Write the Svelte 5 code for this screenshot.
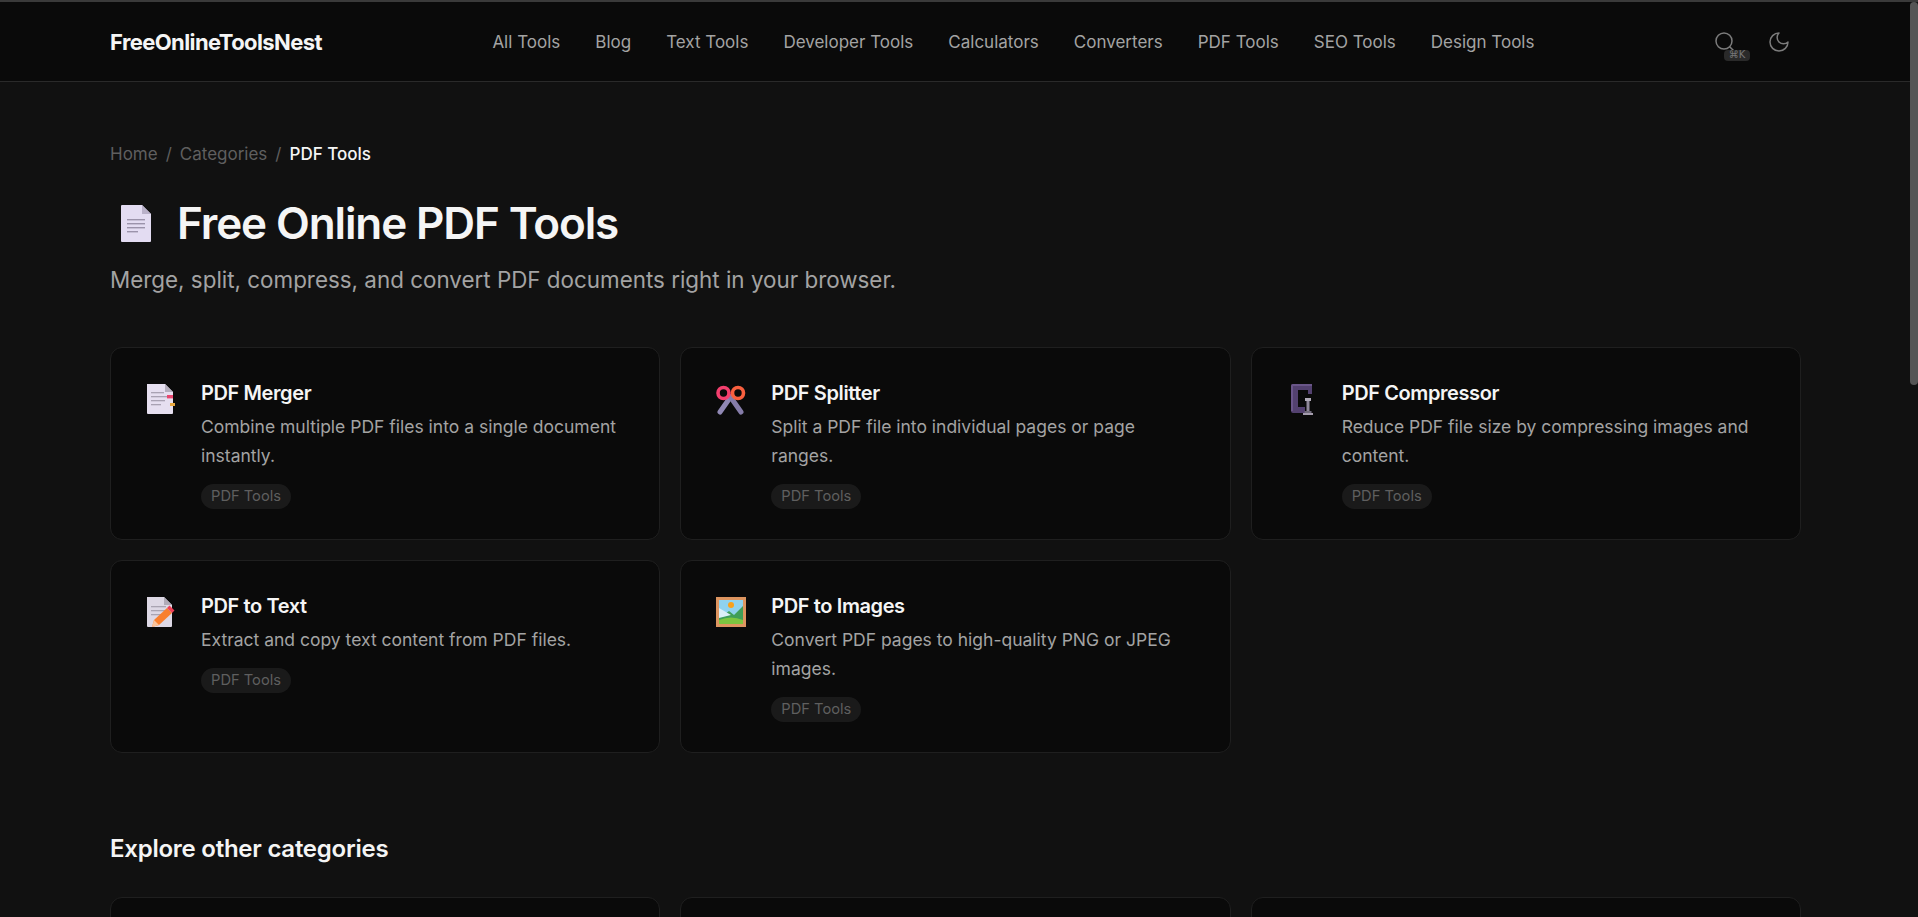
<script>
  const nav = ['All Tools','Blog','Text Tools','Developer Tools','Calculators','Converters','PDF Tools','SEO Tools','Design Tools'];
  const tools = [
    { id:'merge', name:'PDF Merger', desc:'Combine multiple PDF files into a single document instantly.' },
    { id:'split', name:'PDF Splitter', desc:'Split a PDF file into individual pages or page ranges.' },
    { id:'clamp', name:'PDF Compressor', desc:'Reduce PDF file size by compressing images and content.' },
    { id:'text', name:'PDF to Text', desc:'Extract and copy text content from PDF files.' },
    { id:'image', name:'PDF to Images', desc:'Convert PDF pages to high-quality PNG or JPEG images.' }
  ];
  const others = [
    { name:'Text Tools', desc:'Format, count, and transform text.' },
    { name:'Developer Tools', desc:'Format, encode, and debug code.' },
    { name:'Calculators', desc:'Quick calculators for everyday numbers.' },
    { name:'Converters', desc:'Convert units, formats, and files.' },
    { name:'SEO Tools', desc:'Check and improve how pages rank.' },
    { name:'Design Tools', desc:'Pick colours and build gradients.' }
  ];
</script>

<div class="topline"></div>
<div class="scrollthumb"></div>
<div class="page">
<header class="header">
  <a class="logo" href="#top">FreeOnlineToolsNest</a>
  <nav class="nav">
    {#each nav as item}<a href="#top">{item}</a>{/each}
  </nav>
  <div class="actions">
    <button class="iconbtn" aria-label="Search">
      <svg width="24" height="24" viewBox="0 0 24 24" fill="none" stroke="currentColor" stroke-width="1.5" stroke-linecap="round" stroke-linejoin="round"><circle cx="11" cy="11" r="8"/><path d="m21 21-4.3-4.3"/></svg>
      <kbd class="kbd">⌘K</kbd>
    </button>
    <button class="iconbtn" aria-label="Theme">
      <svg width="24" height="24" viewBox="0 0 24 24" fill="none" stroke="currentColor" stroke-width="1.5" stroke-linecap="round" stroke-linejoin="round"><path d="M12 3a6 6 0 0 0 9 9 9 9 0 1 1-9-9Z"/></svg>
    </button>
  </div>
</header>

<main class="main">
  <div class="crumbs">
    <a href="#top">Home</a><span class="sep">/</span><a href="#top">Categories</a><span class="sep">/</span><span class="current">PDF Tools</span>
  </div>

  <div class="titlerow">
    <svg class="titleicon" width="30" height="37" viewBox="0 0 30 37" aria-hidden="true">
      <path d="M1 0H21L30 9V36a1 1 0 0 1-1 1H1a1 1 0 0 1-1-1V1a1 1 0 0 1 1-1Z" fill="#e3dcf2"/>
      <path d="M21 0L30 9H21Z" fill="#b9b1c9"/>
      <g fill="#9b93ab"><rect x="6" y="14" width="18" height="1.4"/><rect x="6" y="18" width="18" height="1.4"/><rect x="6" y="22" width="18" height="1.4"/><rect x="6" y="26" width="11" height="1.4"/></g>
    </svg>
    <h1>Free Online PDF Tools</h1>
  </div>
  <p class="sub">Merge, split, compress, and convert PDF documents right in your browser.</p>

  <section class="grid">
    {#each tools as t}
      <a class="card" href="#top">
        <span class="cardicon">
          <svg width="36" height="36" viewBox="0 0 36 36" aria-hidden="true">
            {#if t.id === 'merge'}
              <path d="M4 3H22L30 11V32a1 1 0 0 1-1 1H5a1 1 0 0 1-1-1Z" fill="#e6dff0"/>
              <path d="M22 3L30 11H22Z" fill="#b4adbd"/>
              <g fill="#a9a2b3"><rect x="8" y="11" width="13" height="1.3"/><rect x="8" y="15" width="16" height="1.3"/><rect x="8" y="19" width="14" height="1.3"/><rect x="8" y="23" width="10" height="1.3"/></g>
              <rect x="24" y="14" width="6" height="3.4" fill="#e8466e"/>
              <rect x="27" y="22" width="5" height="3" fill="#e9a83f"/>
            {:else if t.id === 'split'}
              <g stroke-width="5" stroke-linecap="round" fill="none">
                <path d="M17.5 16L7 31" stroke="#9088b4"/>
                <path d="M17.5 16L28 31" stroke="#857ca8"/>
              </g>
              <circle cx="10.5" cy="12" r="5.5" fill="none" stroke="#f43f6e" stroke-width="3.6"/>
              <circle cx="25" cy="12" r="5.5" fill="none" stroke="#f9603f" stroke-width="3.6"/>
            {:else if t.id === 'clamp'}
              <path d="M9 3H28V13H24V9H14V26H21V32H9Q7 32 7 30V5Q7 3 9 3Z" fill="#53416f"/>
              <path d="M9 3H28V5H9V30H7V5Q7 3 9 3Z" fill="#6a5689"/>
              <rect x="21" y="17" width="6" height="3" fill="#b1abb8"/>
              <rect x="22.5" y="20" width="3" height="10" fill="#8f8899"/>
              <rect x="20.5" y="30" width="7" height="2" fill="#6f6979"/>
              <rect x="19" y="32" width="10" height="2" fill="#a49cad"/>
            {:else if t.id === 'text'}
              <path d="M4 3H21L29 11V32a1 1 0 0 1-1 1H5a1 1 0 0 1-1-1Z" fill="#ddd8e5"/>
              <path d="M21 3L29 11H21Z" fill="#b0abb8"/>
              <g fill="#a9a4b2"><rect x="8" y="12" width="15" height="1.3"/><rect x="8" y="16" width="17" height="1.3"/><rect x="8" y="20" width="13" height="1.3"/></g>
              <path d="M9 33L11 26L24 14L29 19L16 31Z" fill="#f97f2e"/>
              <path d="M9 33L11 26L16 31Z" fill="#fbc39a"/>
              <path d="M24 14L26.5 11.5L31.5 16.5L29 19Z" fill="#ef4056"/>
            {:else}
              <rect x="3" y="3" width="30" height="30" fill="#dd9560"/>
              <rect x="6" y="6" width="24" height="24" fill="#8fd2ee"/>
              <path d="M6 16L12 20L16 17L21 21L30 12V30H6Z" fill="#3f9e58"/>
              <path d="M6 14L18 21L6 24Z" fill="#dbeef7"/>
              <path d="M6 30V26Q18 21 30 26V30Z" fill="#7cc540"/>
              <circle cx="18" cy="11" r="3" fill="#f9a11b"/>
            {/if}
          </svg>
        </span>
        <span class="cardbody">
          <span class="cardtitle">{t.name}</span>
          <span class="carddesc">{t.desc}</span>
          <span class="tag">PDF Tools</span>
        </span>
      </a>
    {/each}
  </section>

  <h2>Explore other categories</h2>
  <section class="grid others">
    {#each others as c}
      <a class="card" href="#top">
        <span class="cardbody">
          <span class="cardtitle">{c.name}</span>
          <span class="carddesc">{c.desc}</span>
        </span>
      </a>
    {/each}
  </section>
</main>
</div>

<style>
  :global(html) { background: #111111; }
  :global(body) { margin: 0; background: #111111; color: #f5f5f5; font-family: Inter, "Liberation Sans", sans-serif; }
  a { color: inherit; text-decoration: none; }

  .topline { height: 2px; background: #3a3a3a; position: relative; z-index: 2; }
  .scrollthumb { position: fixed; top: 2px; right: 0; width: 8px; height: 383px; background: #555555; border-radius: 4px; z-index: 1; }
  .page { padding-right: 8px; }
  .header {
    height: 80px; box-sizing: border-box; padding: 0 111px 0 110px;
    display: flex; align-items: center; justify-content: space-between;
    background: #0a0a0a; border-bottom: 1px solid #2a2a2a;
  }
  .logo { font-size: 22px; font-weight: 700; letter-spacing: -0.6px; color: #f5f5f5; }
  .nav { display: flex; gap: 35px; font-size: 17px; color: #a3a3a3; }
  .actions { display: flex; gap: 14px; }
  .iconbtn {
    position: relative; width: 40px; height: 40px; padding: 8px; box-sizing: border-box;
    background: none; border: 0; color: #7c7c7c;
  }
  .kbd {
    position: absolute; left: 19px; top: 28px; height: 11px; width: 26px; box-sizing: border-box;
    display: flex; align-items: center; justify-content: center;
    font: 10px/1 "DejaVu Sans", sans-serif; color: #777; background: #2a2a2a; border-radius: 4px;
  }

  .main { padding: 0 109px 60px 110px; box-sizing: border-box; }
  .crumbs { padding-top: 60px; font-size: 17px; line-height: 24px; color: #5f5f5f; display: flex; }
  .sep { margin: 0 8px; }
  .current { color: #f5f5f5; font-weight: 500; }
  .titlerow { display: flex; align-items: center; margin-top: 29px; height: 56px; }
  .titleicon { margin: 0 26px 0 11px; flex: none; }
  h1 { margin: 0; font-size: 44px; font-weight: 600; letter-spacing: -1.1px; line-height: 56px; color: #f5f5f5; }
  .sub { margin: 14px 0 0; font-size: 22.4px; line-height: 30px; color: #a3a3a3; }

  .grid { display: grid; grid-template-columns: repeat(3, 1fr); gap: 20px; margin-top: 52px; grid-auto-rows: 193px; }
  .card {
    display: flex; gap: 16px; box-sizing: border-box; padding: 31px 32px 28px;
    background: #0a0a0a; border: 1px solid #1f1f1f; border-radius: 12px;
  }
  .cardicon { flex: none; width: 42px; height: 36px; margin-top: 2px; }
  .cardicon svg { display: block; }
  .cardbody { display: flex; flex-direction: column; align-items: flex-start; min-width: 0; }
  .cardtitle { font-size: 20px; font-weight: 600; line-height: 28px; color: #f5f5f5; letter-spacing: -0.4px; }
  .carddesc { margin-top: 6px; font-size: 17.5px; line-height: 28.8px; color: #a3a3a3; }
  .tag {
    margin-top: 13px; height: 25px; padding: 0 10px; border-radius: 13px; box-sizing: border-box;
    display: flex; align-items: center; font-size: 14.7px; color: #5f5f5f; background: #1a1a1a;
  }
  h2 { margin: 80px 0 0; font-size: 24px; font-weight: 600; line-height: 32px; letter-spacing: -0.25px; color: #f5f5f5; }
  .others { margin-top: 32px; }
</style>
